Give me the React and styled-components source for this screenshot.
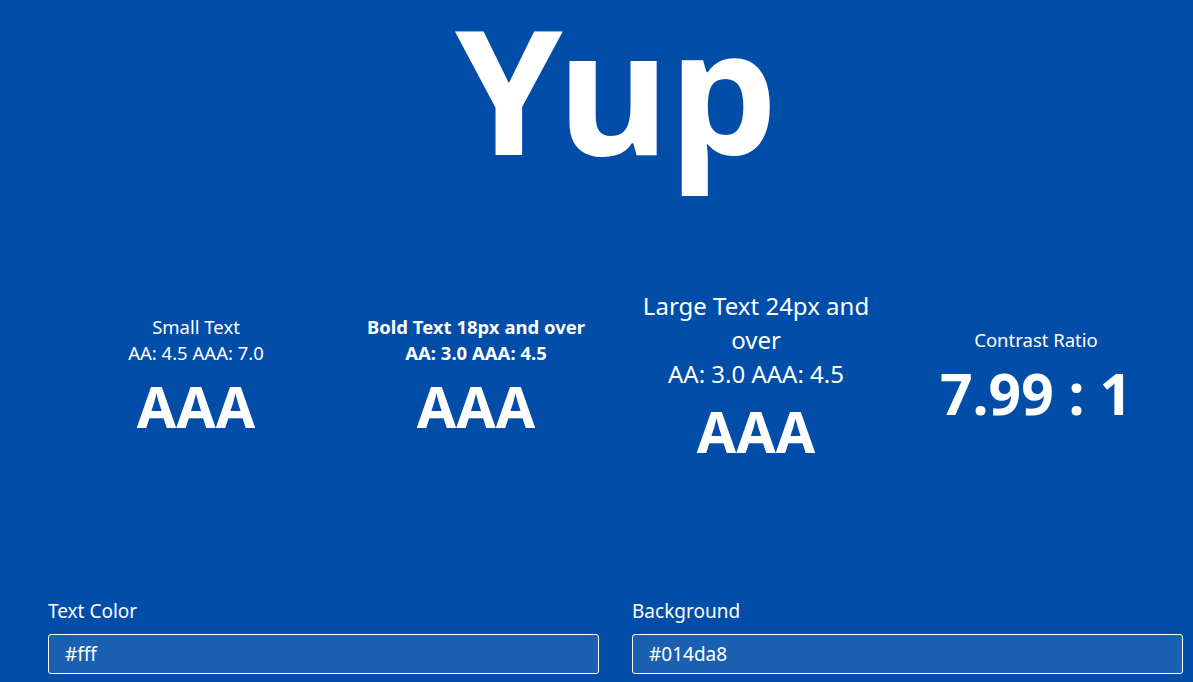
import React from "react";
import styled, { createGlobalStyle } from "styled-components";

const Global = createGlobalStyle`
  html, body { margin: 0; padding: 0; }
  body {
    background: #014da8;
    color: #fff;
    font-family: "Noto Sans", "Open Sans", sans-serif;
  }
  * { box-sizing: border-box; }
`;

const Page = styled.main`
  min-height: 100vh;
  display: flex;
  flex-direction: column;
`;

const Title = styled.h1`
  margin: 0;
  padding: 2px 0 0 40px;
  text-align: center;
  font-size: 172px;
  line-height: 1;
  font-weight: 700;
`;

const Stats = styled.section`
  height: 412px;
  display: grid;
  grid-template-columns: repeat(4, 280px);
  align-items: center;
  padding-left: 56px;
`;

const Stat = styled.div`
  text-align: center;
  padding: 0 20px;
`;

const Caption = styled.div`
  font-size: ${(p) => (p.$large ? 24 : 18.5)}px;
  line-height: ${(p) => (p.$large ? 34 : 26)}px;
  font-weight: ${(p) => (p.$bold ? 700 : 400)};
`;

const Grade = styled.div`
  font-size: 57px;
  font-weight: 700;
  line-height: 80px;
`;

const Fields = styled.section`
  display: flex;
  gap: 33px;
  padding: 11px 10px 0 48px;
`;

const Field = styled.label`
  flex: 1;
  display: flex;
  flex-direction: column;
  gap: 8px;
`;

const FieldLabel = styled.span`
  font-size: 19px;
  line-height: 28.5px;
`;

const Input = styled.input`
  height: 40px;
  width: 100%;
  padding: 0 16px;
  border: 1px solid #fff;
  border-radius: 3px;
  background: rgba(255, 255, 255, 0.1);
  color: #fff;
  font-family: inherit;
  font-size: 19px;
  outline: none;
`;

export default function App() {
  return (
    <>
      <Global />
      <Page>
        <Title>Yup</Title>
        <Stats>
          <Stat>
            <Caption>Small Text</Caption>
            <Caption>AA: 4.5 AAA: 7.0</Caption>
            <Grade>AAA</Grade>
          </Stat>
          <Stat>
            <Caption $bold>Bold Text 18px and over</Caption>
            <Caption $bold>AA: 3.0 AAA: 4.5</Caption>
            <Grade>AAA</Grade>
          </Stat>
          <Stat>
            <Caption $large>Large Text 24px and over</Caption>
            <Caption $large>AA: 3.0 AAA: 4.5</Caption>
            <Grade>AAA</Grade>
          </Stat>
          <Stat>
            <Caption>Contrast Ratio</Caption>
            <Grade>7.99 : 1</Grade>
          </Stat>
        </Stats>
        <Fields>
          <Field>
            <FieldLabel>Text Color</FieldLabel>
            <Input defaultValue="#fff" />
          </Field>
          <Field>
            <FieldLabel>Background</FieldLabel>
            <Input defaultValue="#014da8" />
          </Field>
        </Fields>
      </Page>
    </>
  );
}
